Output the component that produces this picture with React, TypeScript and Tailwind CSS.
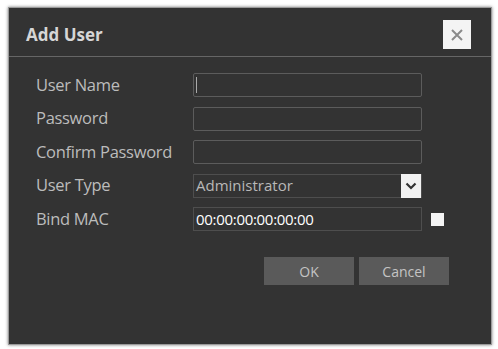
import React from "react";

const labels = ["User Name", "Password", "Confirm Password", "User Type", "Bind MAC"];

const App = () => {
  return (
    <div
      className="w-[498px] h-[349px] bg-white pt-[7px] pl-[8px]"
      style={{ fontFamily: '"Open Sans", "Liberation Sans", sans-serif' }}
    >
      <div className="w-[484px] h-[338px] bg-[#333333] border border-[#9a9a9a] shadow-[0_0_3px_rgba(0,0,0,0.5)] flex flex-col">
        {/* header */}
        <div className="h-[49px] flex items-center justify-between pl-[17px] pr-[20px] pt-[5px] border-b border-[#666666]">
          <span className="text-[17px] font-bold text-[#d6d6d6]">Add User</span>
          <button className="w-[28px] h-[29px] bg-[#f4f4f4] flex items-center justify-center">
            <svg width="14" height="14" viewBox="0 0 14 14">
              <path d="M2 2 L12 12 M12 2 L2 12" stroke="#8a8a8a" strokeWidth="2" />
            </svg>
          </button>
        </div>

        {/* form */}
        <div className="flex pl-[27px] pt-[16px]">
          <div className="w-[157px] flex flex-col gap-[9.5px]">
            {labels.map((l) => (
              <div key={l} className="h-6 flex items-center text-[16.5px] text-[#bcbcbc] tracking-[-0.3px]">
                {l}
              </div>
            ))}
          </div>
          <div className="flex flex-col gap-[9.5px]">
            <div className="w-[229px] h-6 border border-[#5c5c5c] rounded-[2px] flex items-center pl-[2px]">
              <div className="w-px h-[16px] bg-[#aaaaaa]" />
            </div>
            <div className="w-[229px] h-6 border border-[#5c5c5c] rounded-[2px]" />
            <div className="w-[229px] h-6 border border-[#5c5c5c] rounded-[2px]" />
            <div className="w-[229px] h-6 border border-[#4e4e4e] flex items-center justify-between">
              <span className="pl-[2px] text-[15px] text-[#b8b8b8]">Administrator</span>
              <div className="w-[20px] h-[24px] bg-[#f2f2f2] flex items-center justify-center">
                <svg width="12" height="8" viewBox="0 0 12 8">
                  <path d="M1.5 1.5 L6 6 L10.5 1.5" stroke="#333333" strokeWidth="2.2" fill="none" />
                </svg>
              </div>
            </div>
            <div className="flex items-center">
              <div className="w-[229px] h-6 border border-[#4e4e4e] flex items-center pl-[2px]">
                <span className="text-[15px] text-white tracking-[-0.3px]">00:00:00:00:00:00</span>
              </div>
              <div className="ml-[9px] w-[13px] h-[13px] bg-[#f4f4f4]" />
            </div>
          </div>
        </div>

        {/* buttons */}
        <div className="flex justify-end gap-[5px] pr-[42px] mt-[26px]">
          <button className="w-[90px] h-[28px] bg-[#5a5a5a] text-[14px] text-[#c4c4c4]">OK</button>
          <button className="w-[90px] h-[28px] bg-[#5a5a5a] text-[14px] text-[#c4c4c4]">Cancel</button>
        </div>
      </div>
    </div>
  );
};

export default App;
